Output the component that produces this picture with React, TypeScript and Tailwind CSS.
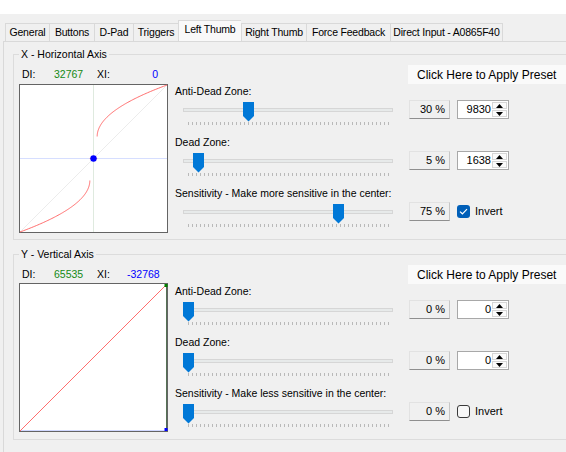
import React from "react";

type Sec = { label: string; pct: number; val?: string; check?: boolean };

const tabs: { name: string; w: string; sel?: boolean }[] = [
  { name: "General", w: "w-[44px]" },
  { name: "Buttons", w: "w-[45px]" },
  { name: "D-Pad", w: "w-[39px]" },
  { name: "Triggers", w: "w-[45px]" },
  { name: "Left Thumb", w: "w-[63px]", sel: true },
  { name: "Right Thumb", w: "w-[65px]" },
  { name: "Force Feedback", w: "w-[84px]" },
  { name: "Direct Input - A0865F40", w: "w-[113px]" },
];

function curvePath(): string {
  const C = 74.5;
  const S = 73.5;
  const pts = (sign: number) => {
    const arr: string[] = [];
    for (let i = 0; i <= 80; i++) {
      const s = i / 80;
      const t = s * s;
      const ax = 0.05 + 0.95 * t;
      const ay = 0.3 + 0.7 * Math.sqrt(t);
      const px = C + sign * ax * S;
      const py = C - sign * ay * S;
      arr.push(`${i === 0 ? "M" : "L"}${px.toFixed(2)} ${py.toFixed(2)}`);
    }
    return arr.join(" ");
  };
  const flat = `M${(C - 0.05 * S).toFixed(2)} ${C} L${(C + 0.05 * S).toFixed(2)} ${C}`;
  return `${pts(1)} ${pts(-1)} ${flat}`;
}

function GraphX() {
  return (
    <svg width="149" height="149" viewBox="0 0 149 149" className="block">
      <rect x="0.5" y="0.5" width="148" height="148" fill="#ffffff" stroke="#646464" />
      <line x1="1" y1="148" x2="148" y2="1" stroke="#ececec" strokeWidth="1" />
      <line x1="1" y1="74.5" x2="148" y2="74.5" stroke="#d6deff" strokeWidth="1" />
      <line x1="74.5" y1="1" x2="74.5" y2="148" stroke="#dfeadf" strokeWidth="1" />
      <path d={curvePath()} fill="none" stroke="#ff5c5c" strokeWidth="0.9" />
      <circle cx="74.5" cy="74.5" r="3.2" fill="#0000ff" />
    </svg>
  );
}

function GraphY() {
  return (
    <svg width="149" height="149" viewBox="0 0 149 149" className="block">
      <rect x="0.5" y="0.5" width="148" height="148" fill="#ffffff" stroke="#646464" />
      <line x1="1" y1="147.5" x2="148" y2="147.5" stroke="#d0d8ff" strokeWidth="1" />
      <line x1="147.5" y1="1" x2="147.5" y2="148" stroke="#557255" strokeWidth="1" />
      <line x1="1" y1="148" x2="148" y2="1" stroke="#ff5c5c" strokeWidth="0.9" />
      <rect x="145.5" y="1" width="3" height="3" fill="#008000" />
      <rect x="145.5" y="145" width="3" height="3" fill="#0000ff" />
    </svg>
  );
}

function Slider({ pct }: { pct: number }) {
  const ticks = Array.from({ length: 51 }, (_, i) => i);
  return (
    <div className="relative w-[234px] h-[27px] shrink-0">
      <div className="ml-[8px] pt-[8px]">
        <div className="w-[210px] h-[4px] border border-[#d6d6d6] bg-[#e7eaea]" />
      </div>
      <div className="ml-[13px] mt-[10px] flex gap-[3px]">
        {ticks.map((i) => (
          <div key={i} className="w-[1px] h-[3px] bg-[#b9b9b9]" />
        ))}
      </div>
      <svg
        width="11"
        height="20"
        viewBox="0 0 11 20"
        className="absolute top-[2px]"
        style={{ left: 8 + pct * 2 }}
      >
        <path d="M0 0 H11 V14 L5.5 19.5 L0 14 Z" fill="#0078d7" />
      </svg>
    </div>
  );
}

function ValueBox({ text }: { text: string }) {
  return (
    <div className="w-[41px] h-[19px] shrink-0 border border-t-[#e2e2e2] border-l-[#e2e2e2] border-r-[#c6c6c6] border-b-[#8f8f8f] bg-[#f0f0f0] flex items-center justify-end pr-[4px] text-[11px] text-black">
      {text}
    </div>
  );
}

function Spin({ val }: { val: string }) {
  return (
    <div className="ml-[7px] w-[52px] h-[19px] shrink-0 border border-[#a8a8a8] bg-white flex">
      <div className="flex-1 flex items-center justify-end pr-[1px] text-[11px] text-black">{val}</div>
      <div className="w-[16px] flex flex-col py-[1px] pr-[1px] gap-[1px]">
        <div className="flex-1 border border-[#d6d6d6] bg-[#fbfbfb] flex items-center justify-center">
          <svg width="7" height="4" viewBox="0 0 7 4"><path d="M3.5 0 L7 4 H0 Z" fill="#000" /></svg>
        </div>
        <div className="flex-1 border border-[#d6d6d6] bg-[#fbfbfb] flex items-center justify-center">
          <svg width="7" height="4" viewBox="0 0 7 4"><path d="M0 0 H7 L3.5 4 Z" fill="#000" /></svg>
        </div>
      </div>
    </div>
  );
}

function Check({ on }: { on: boolean }) {
  return (
    <div className="ml-[7px] flex items-center h-[19px]">
      {on ? (
        <div className="w-[13px] h-[13px] rounded-[3px] bg-[#005fb8] flex items-center justify-center">
          <svg width="9" height="7" viewBox="0 0 9 7">
            <path d="M1 3.6 L3.4 5.8 L8 1.2" fill="none" stroke="#ffffff" strokeWidth="1.2" />
          </svg>
        </div>
      ) : (
        <div className="w-[13px] h-[13px] rounded-[3px] border border-[#3a3a3a] bg-[#f7f7f7]" />
      )}
      <span className="ml-[5px] text-[11px] text-black">Invert</span>
    </div>
  );
}

function Group({
  title,
  di,
  xi,
  secs,
  graph,
  mt,
  gmt,
}: {
  title: string;
  di: string;
  xi: string;
  secs: Sec[];
  graph: React.ReactNode;
  mt: string;
  gmt: string;
}) {
  return (
    <fieldset className={`ml-[9px] ${mt} w-[620px] h-[194px] border border-[#dcdcdc]`}>
      <legend className="ml-[5px] px-[2px] text-[10.5px] leading-[16px] text-black">{title}</legend>
      <div className="flex">
        <div className="pl-[5px] w-[154px]">
          <div className="mt-[4px] h-[16px] flex items-center text-[10.5px] leading-[16px]">
            <span className="ml-[3px] w-[32px] text-black">DI:</span>
            <span className="w-[43px] text-[#158a15]">{di}</span>
            <span className="w-[30px] text-black">XI:</span>
            <span className="w-[31px] text-right text-[#0000ff]">{xi}</span>
          </div>
          <div className={gmt}>{graph}</div>
        </div>
        <div className="ml-[7px] flex flex-col">
          <div className="mt-[3px] ml-[233px] w-[170px] h-[19px] bg-[#fafafa] flex items-center pl-[9px] text-[12px] text-black">
            Click Here to Apply Preset
          </div>
          <div className="-mt-[1px] flex flex-col">
            {secs.map((s, i) => (
              <div key={i} className="h-[51px]">
                <div className="h-[16px] leading-[16px] text-[10.5px] text-black whitespace-nowrap">{s.label}</div>
                <div className="mt-[1px] flex items-start">
                  <Slider pct={s.pct} />
                  <ValueBox text={`${s.pct} %`} />
                  {s.val !== undefined ? <Spin val={s.val} /> : <Check on={!!s.check} />}
                </div>
              </div>
            ))}
          </div>
        </div>
      </div>
    </fieldset>
  );
}

export default function App() {
  return (
    <div className="w-[566px] h-[452px] overflow-hidden bg-[#f0f0f0] font-['Liberation_Sans',Arial,sans-serif]">
      <div className="h-[14px] bg-white" />
      <div className="h-[27px] pl-[5px] flex items-end">
        {tabs.map((t, i) => (
          <div
            key={t.name}
            className={`${t.w} shrink-0 border-t border-l border-[#d9d9d9] ${
              i === tabs.length - 1 ? "border-r" : ""
            } ${
              t.sel ? "h-[21px] bg-[#f9f9f9] pb-[2px]" : "h-[18px] bg-[#f0f0f0]"
            } flex items-center justify-center text-[10.5px] tracking-[-0.2px] text-black whitespace-nowrap`}
          >
            {t.name}
          </div>
        ))}
      </div>
      <div className="ml-[3px] h-[420px] border-t border-l border-[#d9d9d9] pt-[4px]">
        <Group
          title="X - Horizontal Axis"
          di="32767"
          xi="0"
          graph={<GraphX />}
          mt="mt-0"
          gmt="mt-[2px]"
          secs={[
            { label: "Anti-Dead Zone:", pct: 30, val: "9830" },
            { label: "Dead Zone:", pct: 5, val: "1638" },
            { label: "Sensitivity - Make more sensitive in the center:", pct: 75, check: true },
          ]}
        />
        <Group
          title="Y - Vertical Axis"
          di="65535"
          xi="-32768"
          graph={<GraphY />}
          mt="mt-[6px]"
          gmt="mt-[1px]"
          secs={[
            { label: "Anti-Dead Zone:", pct: 0, val: "0" },
            { label: "Dead Zone:", pct: 0, val: "0" },
            { label: "Sensitivity - Make less sensitive in the center:", pct: 0, check: false },
          ]}
        />
      </div>
    </div>
  );
}
